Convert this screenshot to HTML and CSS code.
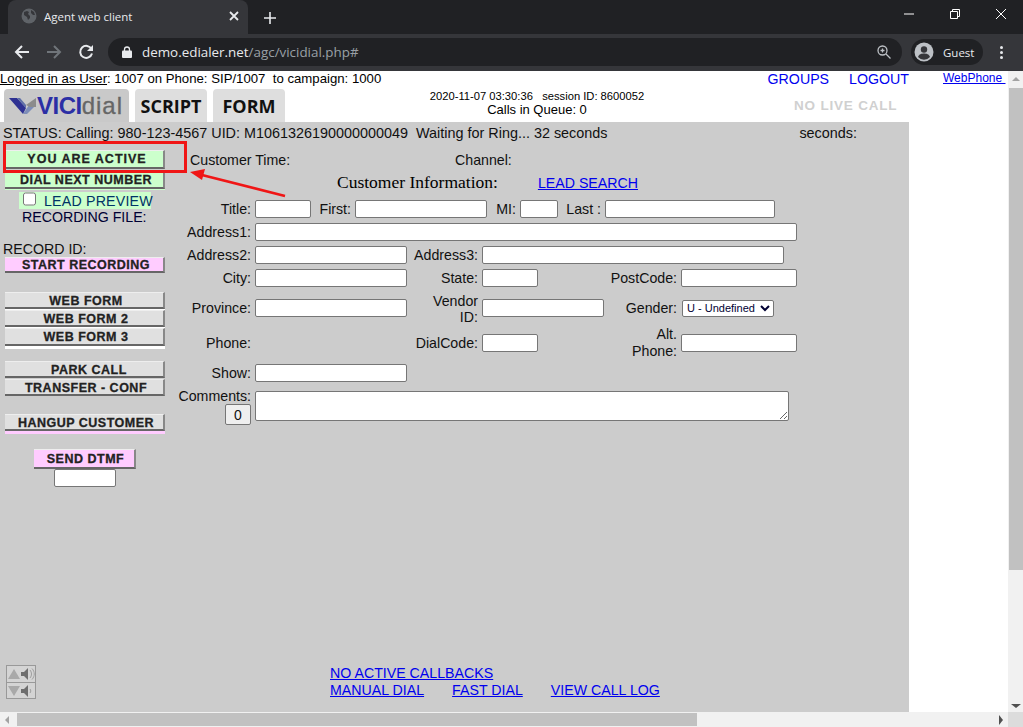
FILE: index.html
```html
<!DOCTYPE html>
<html lang="en">
<head>
  <meta charset="UTF-8" />
  <title>Agent web client</title>
  <link rel="stylesheet" href="styles.css">
</head>
<body>
  <!-- browser window -->
  <div class="tabstrip">
    <div class="tab">
      <svg class="favicon" width="16" height="16" viewBox="0 0 16 16"><circle cx="8" cy="8" r="7.5" fill="#5f6368"/><path d="M3 4l3-1 2 1-1 2 2 2 0 2-2 2-1-3-3-2zM10 2l3 2 1 3-2 0-2-2z" fill="#35363a"/></svg>
      <span class="tab-title">Agent web client</span>
      <svg class="tab-close" width="10" height="10" viewBox="0 0 10 10"><path d="M1 1l8 8M9 1l-8 8" stroke="#e8eaed" stroke-width="1.8"/></svg>
    </div>
    <svg class="new-tab" width="12" height="12" viewBox="0 0 12 12"><path d="M6 0v12M0 6h12" stroke="#e8eaed" stroke-width="1.6"/></svg>
    <div class="window-btns">
      <svg width="10" height="10" viewBox="0 0 10 10"><path d="M0 5h10" stroke="#fff"/></svg>
      <svg width="10" height="10" viewBox="0 0 10 10"><path d="M.5 2.5h7v7h-7zM2.5 2.500v-2h7v7h-2" fill="none" stroke="#fff"/></svg>
      <svg width="10" height="10" viewBox="0 0 10 10"><path d="M0 0l10 10M10 0l-10 10" stroke="#fff"/></svg>
    </div>
  </div>
  <div class="toolbar">
    <svg class="nav" width="16" height="16" viewBox="0 0 16 16"><path d="M15 8H2M8 2L2 8l6 6" fill="none" stroke="#e8eaed" stroke-width="2"/></svg>
    <svg class="nav" width="16" height="16" viewBox="0 0 16 16"><path d="M1 8h13M8 2l6 6-6 6" fill="none" stroke="#70757a" stroke-width="2"/></svg>
    <svg class="nav" width="16" height="16" viewBox="0 0 16 16"><path d="M13.5 5A6 6 0 1 0 14 9.500" fill="none" stroke="#e8eaed" stroke-width="2"/><path d="M15 1v6H9z" fill="#e8eaed"/></svg>
    <div class="omnibox">
      <svg width="10" height="12" viewBox="0 0 10 12"><path d="M2.500 5V3.500a2.500 2.500 0 0 1 5 0V5" fill="none" stroke="#e8eaed" stroke-width="1.300"/><rect y="4.500" width="10" height="7.500" rx="1" fill="#e8eaed"/></svg>
      <span class="url"><b>demo.edialer.net</b>/agc/vicidial.php#</span>
      <svg class="zoom-icon" width="14" height="14" viewBox="0 0 14 14"><circle cx="5.500" cy="5.500" r="4.500" fill="none" stroke="#bdc1c6" stroke-width="1.300"/><path d="M9 9l4.500 4.500M3.500 5.500h4M5.500 3.500v4" stroke="#bdc1c6" stroke-width="1.300"/></svg>
    </div>
    <div class="guest">
      <svg width="20" height="20" viewBox="0 0 20 20"><circle cx="10" cy="10" r="9.500" fill="#bdc1c6"/><circle cx="10" cy="7.500" r="3.200" fill="#35363a"/><path d="M4 15c1-3 3.500-3.500 6-3.500s5 .5 6 3.500a8 8 0 0 1-12 0z" fill="#35363a"/></svg>
      <span>Guest</span>
    </div>
    <div class="menu-dots"><i></i><i></i><i></i></div>
  </div>

  <div class="viewport">
    <div class="page">
      <div class="page-inner">
        <div class="login-row">
          <div class="login-text"><u>Logged in as User</u>: 1007 on Phone: SIP/1007&nbsp; to campaign: 1000</div>
          <div class="top-links"><a href="#">GROUPS</a><a href="#">LOGOUT</a></div>
        </div>

        <div class="header-row">
          <div class="tab-img logo-tab">
            <svg width="28" height="18" viewBox="0 0 28 18"><path d="M0 1h8l9 10-3 6z" fill="#2e3192"/><path d="M8 1h3l6 7 0 3z" fill="#5f6fa8"/><path d="M14 17l6-9 5 2-7 7z" fill="#7d8db8"/><path d="M17 8l10-7v9l-6 0z" fill="#8c8c8c"/></svg>
            <span class="logo-vici">VICI</span><span class="logo-dial">dial</span>
          </div>
          <div class="tab-img">SCRIPT</div>
          <div class="tab-img">FORM</div>
          <div class="header-center">
            <div class="session">2020-11-07 03:30:36 &nbsp; session ID: 8600052</div>
            <div class="queue">Calls in Queue: 0</div>
          </div>
          <div class="no-live">NO LIVE CALL</div>
        </div>

        <div class="panel">
          <div class="status-row">
            <span>STATUS: Calling: 980-123-4567 UID: M1061326190000000049 &nbsp;Waiting for Ring... 32 seconds</span>
            <span class="seconds">seconds:</span>
          </div>

          <div class="panel-body">
            <div class="side">
              <div class="btn green btn-active">YOU ARE ACTIVE</div>
              <div class="green-wrap"><div class="btn green">DIAL NEXT NUMBER</div></div>
              <label class="preview"><input type="checkbox"> LEAD PREVIEW</label>
              <div class="rec-file">RECORDING FILE:</div>
              <div class="rec-id">RECORD ID:</div>
              <div class="btn pink btn-record">START RECORDING</div>

              <div class="btn-group white-wrap">
                <div class="btn grey">WEB FORM</div>
                <div class="btn grey">WEB FORM 2</div>
                <div class="btn grey tall">WEB FORM 3</div>
              </div>
              <div class="btn-group call-group">
                <div class="btn grey park">PARK CALL</div>
                <div class="btn grey">TRANSFER - CONF</div>
              </div>
              <div class="btn-group pink-wrap">
                <div class="btn grey">HANGUP CUSTOMER</div>
              </div>
              <div class="dtmf">
                <div class="btn pink btn-dtmf">SEND DTMF</div>
                <input type="text" class="dtmf-input">
              </div>
            </div>

            <div class="main">
              <div class="info-row">
                <span class="cust-time">Customer Time:</span>
                <span>Channel:</span>
              </div>
              <div class="info-head">
                <span class="info-title">Customer Information:</span>
                <a href="#">LEAD SEARCH</a>
              </div>

              <div class="form">
                <div class="field-row">
                  <span class="lbl">Title:</span><input class="w56">
                  <span class="lbl l36">First:</span><input class="w132">
                  <span class="lbl l25">MI:</span><input class="w38">
                  <span class="lbl l39">Last :</span><input class="w170">
                </div>
                <div class="field-row">
                  <span class="lbl">Address1:</span><input class="w542">
                </div>
                <div class="field-row">
                  <span class="lbl">Address2:</span><input class="w152">
                  <span class="lbl l67">Address3:</span><input class="w302">
                </div>
                <div class="field-row">
                  <span class="lbl">City:</span><input class="w152">
                  <span class="lbl l67">State:</span><input class="w56">
                  <span class="lbl l135">PostCode:</span><input class="w116">
                </div>
                <div class="field-row province-row">
                  <span class="lbl">Province:</span><input class="w152">
                  <span class="lbl l67 vendor">Vendor<br>ID:</span><input class="w122">
                  <span class="lbl l69">Gender:</span>
                  <select class="gender"><option>U - Undefined</option></select>
                </div>
                <div class="field-row phone-row">
                  <span class="lbl phone-lbl">Phone:</span><span class="w152"></span>
                  <span class="lbl l67 phone-lbl">DialCode:</span><input class="w56">
                  <span class="lbl l135 phone-lbl">Alt.<br>Phone:</span><input class="w116">
                </div>
                <div class="field-row">
                  <span class="lbl">Show:</span><input class="w152">
                </div>
                <div class="field-row comments-row">
                  <div class="lbl comments-lbl">Comments:<button class="count">0</button></div>
                  <textarea class="comments"></textarea>
                </div>
              </div>
            </div>
          </div>

          <div class="panel-foot">
            <div class="volume">
              <div class="vol-btn">
                <svg width="28" height="14" viewBox="0 0 28 14"><path d="M1 12L7 2l6 10z" fill="#a9a9a9"/><path d="M14 5h3l4-4v12l-4-4h-3z" fill="#6e6e6e"/><path d="M23 3c2 2.500 2 5.500 0 8M25 1.500c3 3.500 3 7.500 0 11" fill="none" stroke="#a0a0a0"/></svg>
              </div>
              <div class="vol-btn">
                <svg width="28" height="14" viewBox="0 0 28 14"><path d="M1 2l6 10 6-10z" fill="#a9a9a9"/><path d="M14 5h3l4-4v12l-4-4h-3z" fill="#6e6e6e"/><path d="M23 5c1 1.300 1 2.700 0 4" fill="none" stroke="#a0a0a0"/></svg>
              </div>
            </div>
            <div class="foot-links">
              <div><a href="#">NO ACTIVE CALLBACKS</a></div>
              <div class="foot-row"><a href="#">MANUAL DIAL</a><a href="#">FAST DIAL</a><a href="#">VIEW CALL LOG</a></div>
            </div>
          </div>
        </div>

        <!-- annotation drawn over the screenshot -->
        <div class="mark-box"></div>
        <svg class="mark-arrow" width="100" height="32" viewBox="0 0 100 32"><path d="M95 28L12 7" stroke="#f01616" stroke-width="2.500"/><path d="M0 4l15-3-3 11z" fill="#f01616"/></svg>
      </div>
      <div class="webphone"><a href="#">WebPhone&nbsp;</a></div>
    </div>

    <div class="vscroll">
      <div class="arrow-up"></div>
      <div class="vthumb"></div>
      <div class="arrow-down"></div>
    </div>
  </div>
  <div class="hscroll">
    <div class="arrow-left"></div>
    <div class="hthumb"></div>
    <div class="arrow-right"></div>
    <div class="corner"></div>
  </div>
</body>
</html>
```

FILE: styles.css
```css
* {
  box-sizing: border-box;
}

html, body {
  margin: 0;
  height: 727px;
  overflow: hidden;
}

body {
  font-family: "Liberation Sans", Arial, sans-serif;
  display: flex;
  flex-direction: column;
  background: #fff;
}

a {
  color: #0000ee;
}

/* browser window */
.tabstrip {
  height: 34px;
  background: #202124;
  display: flex;
  align-items: flex-end;
  flex: none;
}

.tab {
  width: 240px;
  height: 34px;
  margin-left: 8px;
  padding: 0 9px 2px 13px;
  background: #35363a;
  border-radius: 8px 8px 0 0;
  display: flex;
  align-items: center;
  color: #e8eaed;
  font-family: "Open Sans", sans-serif;
  font-size: 11.5px;
}

.tab-title {
  margin-left: 7px;
  flex: 1;
}

.new-tab {
  margin: 0 0 10px 16px;
}

.window-btns {
  margin-left: auto;
  height: 34px;
  display: flex;
  align-items: center;
  gap: 36px;
  padding: 0 17px 6px 0;
}

.toolbar {
  height: 37px;
  padding: 0 0 1px 14px;
  background: #35363a;
  display: flex;
  align-items: center;
  flex: none;
}

.nav {
  margin-right: 16px;
}

.omnibox {
  width: 794px;
  height: 28px;
  margin-left: -2px;
  padding: 0 11px 0 14px;
  background: #202124;
  border-radius: 14px;
  display: flex;
  align-items: center;
  color: #9aa0a6;
  font-family: "Open Sans", sans-serif;
  font-size: 13.4px;
}

.url {
  margin-left: 10px;
  flex: 1;
}

.url b {
  font-weight: normal;
  color: #e8eaed;
}

.guest {
  width: 72px;
  height: 26px;
  margin-left: 9px;
  padding-left: 3px;
  background: #202124;
  border-radius: 13px;
  display: flex;
  align-items: center;
  gap: 9px;
  color: #e8eaed;
  font-family: "Open Sans", sans-serif;
  font-size: 11.5px;
}

.menu-dots {
  margin-left: 17px;
  display: flex;
  flex-direction: column;
  gap: 2px;
}

.menu-dots i {
  width: 3px;
  height: 3px;
  border-radius: 50%;
  background: #e8eaed;
}

.viewport {
  flex: 1;
  display: flex;
  min-height: 0;
}

.page {
  flex: 1;
  display: flex;
  overflow: hidden;
}

.page-inner {
  width: 909px;
  position: relative;
  display: flex;
  flex-direction: column;
  flex: none;
}

.webphone {
  margin: 0 0 0 34px;
  font-size: 12px;
  line-height: 14px;
}

/* top of the page */
.login-row {
  height: 17px;
  display: flex;
  justify-content: space-between;
  font-size: 13.2px;
  line-height: 15px;
}

.top-links {
  display: flex;
  gap: 20px;
  font-size: 14.2px;
  line-height: 17px;
}

.top-links a {
  text-decoration: none;
}

.header-row {
  height: 34px;
  padding: 1px 0 0 4px;
  display: flex;
  gap: 6px;
  align-items: stretch;
}

.tab-img {
  width: 72px;
  background: #dedede;
  border-radius: 4px 4px 0 0;
  display: flex;
  align-items: center;
  justify-content: center;
  font-family: "Open Sans", sans-serif;
  font-weight: 700;
  font-size: 18px;
  color: #111;
}

.logo-tab {
  width: 125px;
  padding-left: 5px;
  background: #c9c9c9;
  justify-content: flex-start;
}

.logo-vici {
  font-family: "Liberation Sans", sans-serif;
  font-size: 24px;
  letter-spacing: -0.5px;
  color: #2b2fa5;
}

.logo-dial {
  font-family: "Liberation Sans", sans-serif;
  font-size: 24px;
  font-weight: 400;
  letter-spacing: 1px;
  color: #666;
  -webkit-text-stroke: 0.3px #666;
}

.header-center {
  width: 300px;
  margin-left: 96px;
  text-align: center;
  color: #000;
}

.session {
  font-size: 11.2px;
  line-height: 14px;
}

.queue {
  font-size: 13px;
  line-height: 14px;
}

.no-live {
  margin: 9px 0 0 101px;
  font-size: 13.5px;
  font-weight: 700;
  letter-spacing: 0.8px;
  color: #d0d0d0;
}

/* grey panel */
.panel {
  flex: 1;
  background: #ccc;
  display: flex;
  flex-direction: column;
  font-size: 14.2px;
  color: #111;
}

.status-row {
  height: 21px;
  padding: 3px 0 0 3px;
  position: relative;
  display: flex;
  line-height: 17px;
  font-size: 14.4px;
}

.seconds {
  margin-left: auto;
  padding-right: 52px;
}

.panel-body {
  display: flex;
}

.side {
  width: 175px;
  padding: 7px 0 0 5px;
  flex: none;
}

.btn {
  width: 160px;
  height: 17px;
  padding-left: 4px;
  text-align: center;
  font-size: 12.5px;
  font-weight: 700;
  line-height: 17px;
  letter-spacing: 0.5px;
  color: #222;
  -webkit-text-stroke: 0.3px #222;
  border-top: 1px solid #eee;
  border-right: 2px solid #888;
  border-bottom: 2px solid #666;
}

.green {
  background: #ccffcc;
}

.pink {
  background: #ffccff;
}

.grey {
  background: #e0e0e0;
}

.btn-active {
  height: 19px;
  padding-left: 6px;
  line-height: 17px;
  letter-spacing: 1px;
}

.green-wrap {
  margin-top: 1px;
  height: 20px;
  width: 160px;
  background: #ccffcc;
}

.green-wrap .btn {
  height: 19px;
  line-height: 19px;
}

.preview {
  display: flex;
  align-items: center;
  width: 132px;
  height: 17px;
  margin: 2px 0 0 14px;
  padding-left: 4px;
  background: #ccffcc;
  color: #003366;
  letter-spacing: 0.2px;
  white-space: nowrap;
}

.preview input {
  width: 14px;
  height: 14px;
  margin: -3px 8px 0 0;
}

.rec-file {
  margin-left: 17px;
  line-height: 17px;
  color: #003;
}

.rec-id {
  margin: 15px 0 0 -2px;
  line-height: 16px;
}

.btn-record {
  height: 16px;
  line-height: 15px;
  letter-spacing: 0.5px;
}

.btn-group {
  margin-top: 19px;
  width: 160px;
  display: flex;
  flex-direction: column;
  gap: 1px;
}

.tall {
  height: 18px;
}

.call-group {
  margin-top: 12px;
}

.white-wrap {
  background: #fff;
  padding-bottom: 3px;
}

.pink-wrap {
  margin-top: 18px;
  background: #ffccff;
  padding-bottom: 3px;
}

.park {
  padding-left: 10px;
}

.dtmf {
  margin-top: 15px;
  width: 160px;
  display: flex;
  flex-direction: column;
  align-items: center;
}

.btn-dtmf {
  width: 102px;
  height: 20px;
  line-height: 19px;
  padding-left: 3px;
}

.dtmf-input {
  width: 62px;
  height: 18px;
  margin-top: 1px;
}

/* customer form */
.main {
  flex: 1;
}

.info-row {
  height: 20px;
  padding: 9px 0 0 15px;
  display: flex;
  line-height: 17px;
  box-sizing: content-box;
}

.cust-time {
  width: 265px;
}

.info-head {
  height: 19px;
  margin-top: 1px;
  padding-left: 162px;
  display: flex;
  align-items: center;
  gap: 40px;
}

.info-title {
  font-family: "Liberation Serif", serif;
  font-size: 17.5px;
  color: #000;
}

.form {
  margin-top: 8px;
  display: flex;
  flex-direction: column;
  gap: 5px;
}

.field-row {
  display: flex;
  align-items: center;
  gap: 4px;
}

.lbl {
  width: 76px;
  text-align: right;
  line-height: 16px;
  flex: none;
}

.l25 { width: 25px; }
.l36 { width: 36px; }
.l39 { width: 39px; }
.l67 { width: 67px; }
.l69 { width: 69px; }
.l135 { width: 135px; }

.province-row {
  margin-top: -1px;
}

.vendor {
  padding-top: 2px;
}

.phone-row {
  margin: -4px 0 -1px;
}

.phone-lbl {
  line-height: 17px;
}

.field-row input,
.dtmf-input,
.comments {
  height: 18px;
  padding: 0 2px;
  border: 1px solid #767676;
  border-radius: 2px;
  background: #fff;
  flex: none;
  margin: 0;
}

.w38 { width: 38px; }
.w56 { width: 56px; }
.w116 { width: 116px; }
.w122 { width: 122px; }
.w132 { width: 132px; }
.w152 { width: 152px; flex: none; }
.w170 { width: 170px; }
.w302 { width: 302px; }
.w542 { width: 542px; }

.gender {
  width: 92px;
  height: 17px;
  margin-left: 1px;
  padding: 0;
  font-family: "Liberation Sans", sans-serif;
  font-size: 11px;
  border: 1px solid #767676;
  border-radius: 2px;
  background: #fff;
  color: #003;
}

.comments-row {
  margin-top: 4px;
  align-items: flex-start;
}

.comments-lbl {
  display: flex;
  flex-direction: column;
  align-items: flex-end;
  margin-top: -3px;
}

.count {
  width: 26px;
  height: 21px;
  margin: 0;
  padding: 0;
  border: 1px solid #767676;
  border-radius: 2px;
  background: #efefef;
  font-family: "Liberation Sans", sans-serif;
  font-size: 14px;
  color: #111;
}

.comments {
  width: 534px;
  height: 30px;
  display: block;
}

/* bottom of the panel */
.panel-foot {
  margin-top: auto;
  padding: 0 0 13px 6px;
  display: flex;
  align-items: flex-end;
  line-height: 17px;
}

.volume {
  width: 30px;
  border: 1px solid #999;
  background: #d4d4d4;
}

.vol-btn {
  height: 16px;
  display: flex;
  align-items: center;
  justify-content: center;
}

.vol-btn + .vol-btn {
  border-top: 1px solid #999;
}

.foot-links {
  margin-left: 294px;
}

.foot-row {
  display: flex;
  gap: 28px;
}

/* red annotation */
.mark-box {
  position: absolute;
  left: 3px;
  top: 70px;
  width: 184px;
  height: 32px;
  border: 3px solid #f01616;
}

.mark-arrow {
  position: absolute;
  left: 190px;
  top: 97px;
}

/* scrollbars */
.vscroll {
  width: 15px;
  background: #f1f1f1;
  display: flex;
  flex-direction: column;
  align-items: center;
  flex: none;
  position: relative;
}

.arrow-up {
  margin-top: 6px;
  border: 4px solid transparent;
  border-top: 0;
  border-bottom: 4px solid #a3a3a3;
}

.vthumb {
  width: 14px;
  height: 482px;
  margin: 7px 0 0 1px;
  background: #c1c1c1;
}

.arrow-down {
  margin-top: auto;
  margin-bottom: 4px;
  border: 5px solid transparent;
  border-bottom: 0;
  border-top: 4px solid #505050;
}

.hscroll {
  height: 15px;
  background: #f1f1f1;
  display: flex;
  align-items: center;
  flex: none;
}

.arrow-left {
  margin-left: 5px;
  border: 4px solid transparent;
  border-left: 0;
  border-right: 4px solid #a3a3a3;
}

.hthumb {
  width: 680px;
  height: 13px;
  margin-left: 8px;
  background: #c1c1c1;
}

.arrow-right {
  margin-left: auto;
  margin-right: 5px;
  border: 5px solid transparent;
  border-right: 0;
  border-left: 4px solid #505050;
}

.corner {
  width: 15px;
  height: 15px;
  background: #dcdcdc;
}
```
